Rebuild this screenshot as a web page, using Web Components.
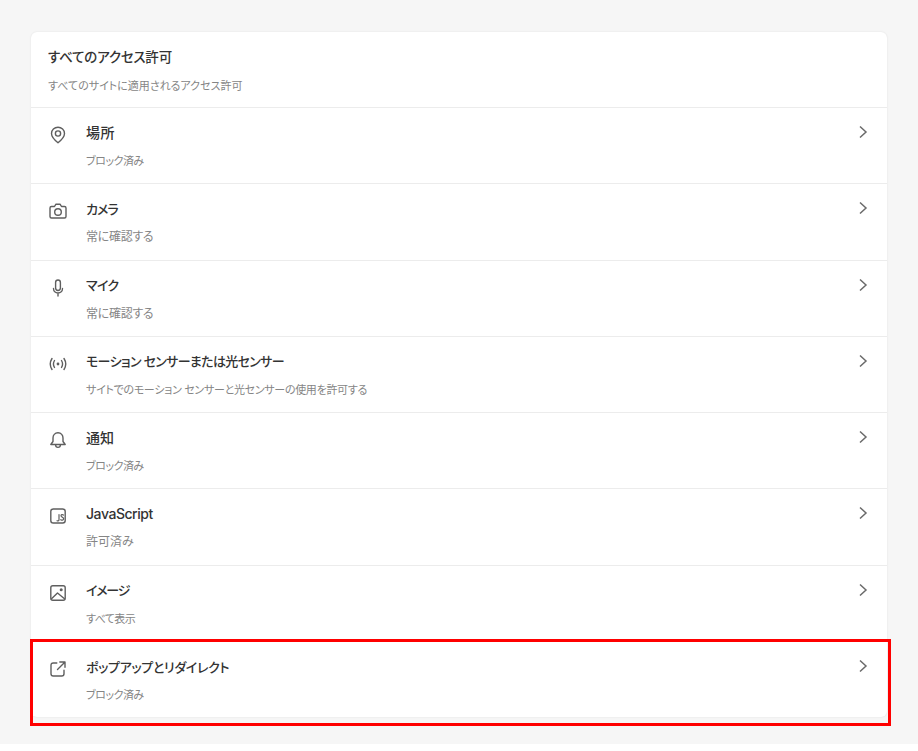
<!DOCTYPE html>
<html lang="ja">
<head>
<meta charset="utf-8">
<title>すべてのアクセス許可</title>
<style>
html { background: #fff; }
body { margin: 0; font-family: "Inter", "Noto Sans CJK JP", sans-serif; font-feature-settings: "palt"; }
</style>
</head>
<body>
<settings-page>
  <permission-card title="すべてのアクセス許可" subtitle="すべてのサイトに適用されるアクセス許可">
    <permission-row icon="location" label="場所" status="ブロック済み" style="--ls:.5px; --ss:11px; --st:-.5px"></permission-row>
    <permission-row icon="camera" label="カメラ" status="常に確認する" style="--ls:-1px; --ts:13px; --st:-.3px"></permission-row>
    <permission-row icon="mic" label="マイク" status="常に確認する" style="--ls:-.75px; --ts:13px; --st:-.3px"></permission-row>
    <permission-row icon="sensor" label="モーション センサーまたは光センサー" status="サイトでのモーション センサーと光センサーの使用を許可する" style="--ls:-.67px; --ts:13px; --ss:11px; --st:-.3px"></permission-row>
    <permission-row icon="bell" label="通知" status="ブロック済み" style="--ss:11px; --st:-.5px"></permission-row>
    <permission-row icon="js" label="JavaScript" status="許可済み" style="--ls:-.45px"></permission-row>
    <permission-row icon="image" label="イメージ" status="すべて表示" style="--ls:-1.2px; --ts:13px; --ss:11px; --st:-.6px"></permission-row>
    <permission-row icon="popup" label="ポップアップとリダイレクト" status="ブロック済み" style="--ls:-.35px; --ts:13px; --ss:11px; --st:-.5px" marked></permission-row>
  </permission-card>
</settings-page>

<script>
// icons, all on a 20x20 box
const icons = {
  location: '<path d="M10 2.200c-3.600 0-6.500 2.700-6.500 6.300 0 3.700 3.300 6.700 6.500 9.300 3.200-2.600 6.500-5.600 6.500-9.300 0-3.600-2.900-6.300-6.500-6.300z"/><circle cx="10" cy="8.500" r="2.600"/>',
  camera: '<path d="M3.500 5.500h3l1.300-2.200h4.400l1.300 2.200h3c.9 0 1.500.6 1.500 1.500v8.500c0 .9-.6 1.500-1.500 1.500h-13c-.9 0-1.500-.6-1.500-1.500V7c0-.9.600-1.500 1.500-1.500z"/><circle cx="10" cy="11" r="3.300"/>',
  mic: '<rect x="7.600" y="2" width="4.800" height="10.500" rx="2.400"/><path d="M5.500 10.500c0 2.600 2 4.500 4.500 4.500s4.500-1.900 4.500-4.500M10 15v3"/>',
  sensor: '<path d="M6.500 6.500c-1.400 2.300-1.400 4.700 0 7M4 4.500c-2.300 3.600-2.300 7.400 0 11M13.500 6.500c1.400 2.300 1.400 4.700 0 7M16 4.500c2.300 3.600 2.300 7.400 0 11"/><circle cx="10" cy="10" r="1.400" fill="#5f5f5f" stroke="none"/>',
  bell: '<path d="M10 2.800c-3.200 0-5 2.400-5 5.200v3.500L2.800 14.500h14.400L15 11.500V8c0-2.800-1.800-5.200-5-5.200z"/><path d="M7.600 14.800c0 1.500 1.100 2.600 2.400 2.600s2.400-1.100 2.400-2.600"/>',
  js: '<rect x="2.800" y="3" width="14.400" height="14" rx="2.500"/><path d="M11 8.500v5.200c0 1-.8 1.500-2 1.100M15.400 9c-.8-.7-2.400-.5-2.400.8 0 1.600 2.600 1 2.600 2.900 0 1.600-1.800 1.900-2.800 1" stroke-width="1.200"/>',
  image: '<rect x="2.800" y="2.800" width="14.400" height="14.400" rx="2"/><path d="M3.500 15.800L9.500 10l7 5.800"/><circle cx="13.200" cy="6.800" r="1.500" fill="#5f5f5f" stroke="none"/>',
  popup: '<path d="M8.800 4H5.300C3.900 4 3 4.900 3 6.300v8.400C3 16.100 3.900 17 5.300 17h8.400c1.400 0 2.300-.9 2.300-2.300v-3.500M11.800 3H17v5.200M17 3L9.500 10.500"/>'
};

const pageTemplate = document.createElement('template');
pageTemplate.innerHTML = `
  <style>
    :host { display: block; height: 744px; box-sizing: border-box; padding: 32px 31px 0; background: #f6f6f6; }
  </style>
  <slot></slot>
`;

const cardTemplate = document.createElement('template');
cardTemplate.innerHTML = `
  <style>
    :host { display: block; width: 856px; background: #fff; border-radius: 6px; box-shadow: 0 0 2px rgba(0,0,0,.1); }
    header { box-sizing: border-box; height: 75px; padding: 14px 17px 0; }
    h2 { margin: 0; font-size: 13.500px; letter-spacing: -.2px; line-height: 22px; font-weight: 500; color: #333; }
    p { margin: 9px 0 0; font-size: 11px; line-height: 18px; color: #858585; }
  </style>
  <header><h2></h2><p></p></header>
  <slot></slot>
`;

const rowTemplate = document.createElement('template');
rowTemplate.innerHTML = `
  <style>
    :host { display: flex; position: relative; box-sizing: border-box; height: 76.3px; border-top: 1px solid #ececec; padding-left: 17px; }
    .icon { width: 20px; height: 20px; margin-top: 17px; flex: none; fill: none; stroke: #5f5f5f; stroke-width: 1.400; stroke-linecap: round; stroke-linejoin: round; }
    .text { flex: 1; margin-left: 18px; padding-top: 13.500px; }
    .label { font-size: var(--ts, 14px); letter-spacing: var(--ls, 0); line-height: 22px; font-weight: 500; color: #333; }
    .status { margin-top: 8.500px; font-size: var(--ss, 12px); letter-spacing: var(--st, 0); line-height: 18px; color: #858585; }
    .chevron { width: 16px; height: 16px; margin: 16px 16px 0 0; flex: none; fill: none; stroke: #6a6a6a; stroke-width: 1.500; }
    .mark { display: none; position: absolute; left: -1px; right: -4px; top: -3.500px; bottom: -8.700px; border: 3.500px solid #f00; pointer-events: none; }
    :host([marked]) .mark { display: block; }
  </style>
  <svg class="icon" viewBox="0 0 20 20"></svg>
  <div class="text"><div class="label"></div><div class="status"></div></div>
  <svg class="chevron" viewBox="0 0 16 16"><path d="M5 2.500L11 8l-6 5.500"/></svg>
  <div class="mark"></div>
`;

class SettingsPage extends HTMLElement {
  connectedCallback() {
    this.attachShadow({ mode: 'open' }).appendChild(pageTemplate.content.cloneNode(true));
  }
}

class PermissionCard extends HTMLElement {
  connectedCallback() {
    const root = this.attachShadow({ mode: 'open' });
    root.appendChild(cardTemplate.content.cloneNode(true));
    root.querySelector('h2').textContent = this.getAttribute('title');
    root.querySelector('p').textContent = this.getAttribute('subtitle');
    this.removeAttribute('title');
  }
}

class PermissionRow extends HTMLElement {
  connectedCallback() {
    const root = this.attachShadow({ mode: 'open' });
    root.appendChild(rowTemplate.content.cloneNode(true));
    root.querySelector('.icon').innerHTML = icons[this.getAttribute('icon')];
    root.querySelector('.label').textContent = this.getAttribute('label');
    root.querySelector('.status').textContent = this.getAttribute('status');
  }
}

customElements.define('settings-page', SettingsPage);
customElements.define('permission-card', PermissionCard);
customElements.define('permission-row', PermissionRow);
</script>
</body>
</html>
